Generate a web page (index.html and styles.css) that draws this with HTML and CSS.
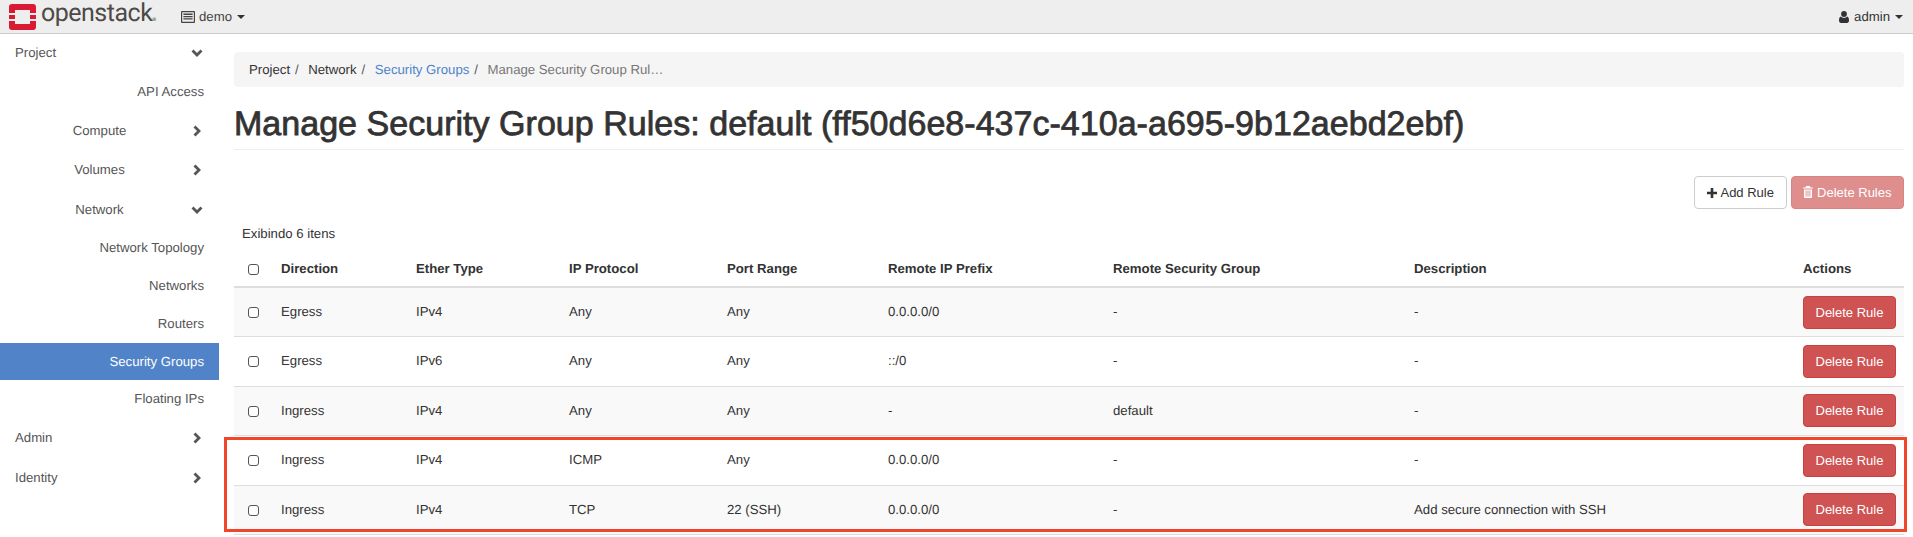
FILE: index.html
```html
<!doctype html>
<html lang="en">
  <head>
    <meta charset="UTF-8" />
    <meta name="viewport" content="width=device-width, initial-scale=1.0" />
    <title>Manage Security Group Rules</title>
    <link rel="stylesheet" href="styles.css">
  </head>
  <body>
    <header class="navbar">
      <a class="brand" href="#">
        <svg class="brand-logo" viewBox="0 0 27 26">
          <path fill="#da1a32" fill-rule="evenodd" d="M3 0h21a3 3 0 0 1 3 3v6h-6V6H6v3H0V3a3 3 0 0 1 3-3zM0 11h6v4H0zM21 11h6v4h-6zM0 17h6v3h15v-3h6v6a3 3 0 0 1-3 3H3a3 3 0 0 1-3-3z"/>
        </svg>
        <span class="brand-name">openstack<small>®</small></span>
      </a>
      <div class="project-picker">
        <svg class="icon-project" viewBox="0 0 14 12">
          <path fill="#444" fill-rule="evenodd" d="M1 0h12a1 1 0 0 1 1 1v10a1 1 0 0 1-1 1H1a1 1 0 0 1-1-1V1a1 1 0 0 1 1-1zm.2 1.2v9.6h11.6V1.2zM2.4 2.5h9.2v1.4H2.4zM2.4 5h9.2v1.2H2.4zM2.4 7.3h9.2v1.2H2.4z"/>
        </svg>
        <span>demo</span>
        <i class="caret"></i>
      </div>
      <div class="user-menu">
        <svg class="icon-user" viewBox="0 0 10 12">
          <circle cx="5" cy="3" r="2.9" fill="#333"/>
          <path fill="#333" d="M1.8 5.6C2.6 6.5 3.7 7 5 7s2.4-.5 3.2-1.4C9.4 5.9 10 7.4 10 9.6 10 11 9.2 12 8 12H2C.8 12 0 11 0 9.6 0 7.4.6 5.9 1.8 5.6z"/>
        </svg>
        <span>admin</span>
        <i class="caret"></i>
      </div>
    </header>

    <div class="page">
      <nav class="sidebar">
        <a class="nav-top" href="#">Project
          <svg class="chev" viewBox="0 0 12 12"><path d="M1.5 3.5 6 8l4.5-4.5"/></svg>
        </a>
        <a class="nav-leaf" href="#">API Access</a>
        <a class="nav-group" href="#"><span>Compute</span>
          <svg class="chev" viewBox="0 0 12 12"><path d="M3.5 1.5 8 6l-4.5 4.5"/></svg>
        </a>
        <a class="nav-group" href="#"><span>Volumes</span>
          <svg class="chev" viewBox="0 0 12 12"><path d="M3.5 1.5 8 6l-4.5 4.5"/></svg>
        </a>
        <a class="nav-group" href="#"><span>Network</span>
          <svg class="chev" viewBox="0 0 12 12"><path d="M1.5 3.5 6 8l4.5-4.5"/></svg>
        </a>
        <a class="nav-leaf" href="#">Network Topology</a>
        <a class="nav-leaf" href="#">Networks</a>
        <a class="nav-leaf" href="#">Routers</a>
        <a class="nav-leaf active" href="#">Security Groups</a>
        <a class="nav-leaf" href="#">Floating IPs</a>
        <a class="nav-top" href="#">Admin
          <svg class="chev" viewBox="0 0 12 12"><path d="M3.5 1.5 8 6l-4.5 4.5"/></svg>
        </a>
        <a class="nav-top" href="#">Identity
          <svg class="chev" viewBox="0 0 12 12"><path d="M3.5 1.5 8 6l-4.5 4.5"/></svg>
        </a>
      </nav>

      <main class="content">
        <ol class="breadcrumb">
          <li>Project</li>
          <li>Network</li>
          <li><a href="#">Security Groups</a></li>
          <li class="current">Manage Security Group Rul…</li>
        </ol>

        <div class="page-header">
          <h1>Manage Security Group Rules: default (ff50d6e8-437c-410a-a695-9b12aebd2ebf)</h1>
        </div>

        <div class="toolbar">
          <button class="btn btn-default" type="button">
            <svg class="icon-plus" viewBox="0 0 10 10"><path d="M3.7 0h2.6v3.7H10v2.6H6.3V10H3.7V6.3H0V3.7h3.7z"/></svg>
            Add Rule
          </button>
          <button class="btn btn-danger disabled" type="button">
            <svg class="icon-trash" viewBox="0 0 10 12"><path fill-rule="evenodd" d="M3.2 0h3.6l.7 1.4H10v1.2H0V1.4h2.5zM1 3.4h8V11a1 1 0 0 1-1 1H2a1 1 0 0 1-1-1zm1.6 1.2v6h.9v-6zm1.9 0v6h1v-6zm2 0v6h.9v-6z"/></svg>
            Delete Rules
          </button>
        </div>

        <div class="count">Exibindo 6 itens</div>

        <div class="table-wrap">
          <table class="rules">
            <thead>
              <tr>
                <th class="col-check"><input type="checkbox" /></th>
                <th class="col-direction">Direction</th>
                <th class="col-ether">Ether Type</th>
                <th class="col-proto">IP Protocol</th>
                <th class="col-port">Port Range</th>
                <th class="col-prefix">Remote IP Prefix</th>
                <th class="col-group">Remote Security Group</th>
                <th class="col-desc">Description</th>
                <th class="col-actions">Actions</th>
              </tr>
            </thead>
            <tbody>
              <tr>
                <td><input type="checkbox" /></td>
                <td>Egress</td><td>IPv4</td><td>Any</td><td>Any</td><td>0.0.0.0/0</td><td>-</td><td>-</td>
                <td><button class="btn btn-danger" type="button">Delete Rule</button></td>
              </tr>
              <tr>
                <td><input type="checkbox" /></td>
                <td>Egress</td><td>IPv6</td><td>Any</td><td>Any</td><td>::/0</td><td>-</td><td>-</td>
                <td><button class="btn btn-danger" type="button">Delete Rule</button></td>
              </tr>
              <tr>
                <td><input type="checkbox" /></td>
                <td>Ingress</td><td>IPv4</td><td>Any</td><td>Any</td><td>-</td><td>default</td><td>-</td>
                <td><button class="btn btn-danger" type="button">Delete Rule</button></td>
              </tr>
              <tr>
                <td><input type="checkbox" /></td>
                <td>Ingress</td><td>IPv4</td><td>ICMP</td><td>Any</td><td>0.0.0.0/0</td><td>-</td><td>-</td>
                <td><button class="btn btn-danger" type="button">Delete Rule</button></td>
              </tr>
              <tr>
                <td><input type="checkbox" /></td>
                <td>Ingress</td><td>IPv4</td><td>TCP</td><td>22 (SSH)</td><td>0.0.0.0/0</td><td>-</td><td>Add secure connection with SSH</td>
                <td><button class="btn btn-danger" type="button">Delete Rule</button></td>
              </tr>
            </tbody>
          </table>
          <div class="highlight"></div>
        </div>
      </main>
    </div>
  </body>
</html>
```

FILE: styles.css
```css
html,
body {
  height: 100%;
}

body {
  font-family: "Liberation Sans", Arial, sans-serif;
  font-size: 13.2px;
  line-height: 18px;
  color: #333;
  margin: 0;
  padding: 0;
  background-color: #fff;
  overflow: hidden;
  text-rendering: geometricPrecision;
}

a {
  text-decoration: none;
}

.navbar {
  display: flex;
  align-items: center;
  height: 33px;
  background-color: #eee;
  border-bottom: 1px solid #ccc;
}

.brand {
  display: flex;
  align-items: center;
  margin-left: 9px;
  width: 172px;
  height: 30px;
}

.brand-logo {
  flex: none;
  width: 27px;
  height: 26px;
  margin-right: 5px;
}

.brand-name {
  font-family: Roboto, sans-serif;
  font-size: 25px;
  font-weight: 400;
  letter-spacing: -0.5px;
  line-height: 28px;
  color: #4d4a47;
}

.brand-name small {
  font-size: 5px;
  font-weight: 400;
  letter-spacing: 0;
}

.project-picker {
  display: flex;
  align-items: center;
  color: #444;
}

.icon-project {
  width: 14px;
  height: 12px;
  margin-right: 4px;
}

.caret {
  width: 0;
  height: 0;
  margin-left: 5px;
  border-top: 4px solid #333;
  border-left: 4px solid transparent;
  border-right: 4px solid transparent;
}

.user-menu {
  display: flex;
  align-items: center;
  margin-left: auto;
  margin-right: 10px;
}

.icon-user {
  width: 10px;
  height: 12px;
  margin-right: 5px;
}

.page {
  display: flex;
}

.sidebar {
  flex: none;
  width: 219px;
  margin-top: -0.5px;
}

.nav-top,
.nav-group,
.nav-leaf {
  display: flex;
  align-items: center;
  color: #555;
}

.nav-top {
  justify-content: space-between;
  height: 39.5px;
  padding: 0 15px;
}

.nav-group {
  height: 39.5px;
  padding-right: 15px;
}

.nav-group span {
  flex: 1;
  text-align: center;
  padding-left: 8px;
}

.nav-leaf {
  justify-content: flex-end;
  height: 37.8px;
  padding-right: 15px;
}

.nav-leaf.active {
  background-color: #5083c8;
  color: #fff;
}

.chev {
  width: 12px;
  height: 12px;
  margin-right: 1px;
  fill: none;
  stroke: #555;
  stroke-width: 2.8;
}

.content {
  flex: 1;
  min-width: 0;
  padding: 18px 9px 0 15px;
}

.breadcrumb {
  display: flex;
  height: 35px;
  align-items: center;
  box-sizing: border-box;
  margin: 0;
  padding: 0 15px;
  list-style: none;
  background-color: #f5f5f5;
  border-radius: 4px;
}

.breadcrumb li + li::before {
  content: "/";
  padding: 0 9.5px 0 5px;
  color: #555;
}

.breadcrumb a {
  color: #4d82cc;
}

.breadcrumb .current {
  color: #777;
}

.page-header {
  margin-top: 19px;
  padding-bottom: 7px;
  border-bottom: 1px solid #eee;
}

h1 {
  margin: 0;
  font-size: 34px;
  font-weight: normal;
  line-height: 36px;
  letter-spacing: 0.03px;
  color: #333;
  -webkit-text-stroke: 0.8px #333;
  white-space: nowrap;
}

.toolbar {
  display: flex;
  justify-content: flex-end;
  gap: 4px;
  margin-top: 26px;
}

.btn {
  box-sizing: border-box;
  height: 33px;
  padding: 0 11.5px;
  font-family: inherit;
  font-size: 13px;
  white-space: nowrap;
  border: 1px solid transparent;
  border-radius: 4px;
  cursor: pointer;
}

.btn svg {
  vertical-align: -1px;
}

.btn-default {
  padding: 0 12px;
  color: #333;
  background-color: #fff;
  border-color: #ccc;
}

.btn-danger {
  color: #fff;
  background-color: #cf5353;
  border-color: #c9403d;
}

.btn-danger.disabled {
  opacity: 0.65;
}

.icon-plus {
  width: 10px;
  height: 10px;
  margin-right: 1px;
  fill: #333;
}

.icon-trash {
  width: 10px;
  height: 12px;
  fill: #fff;
}

.count {
  margin-top: 16px;
  padding-left: 8px;
}

.table-wrap {
  position: relative;
}

.rules {
  width: 100%;
  table-layout: fixed;
  border-collapse: collapse;
}

.rules th {
  height: 44px;
  box-sizing: border-box;
  padding: 8px;
  text-align: left;
  vertical-align: bottom;
  border-bottom: 2px solid #ddd;
}

.rules td {
  height: 49.5px;
  box-sizing: border-box;
  padding: 0 8px;
  vertical-align: middle;
  border-bottom: 1px solid #ddd;
}

.rules tbody tr:nth-child(odd) {
  background-color: #f9f9f9;
}

.col-check { width: 39px; }
.col-direction { width: 135px; }
.col-ether { width: 153px; }
.col-proto { width: 158px; }
.col-port { width: 161px; }
.col-prefix { width: 225px; }
.col-group { width: 301px; }
.col-desc { width: 389px; }

input[type="checkbox"] {
  appearance: none;
  box-sizing: border-box;
  display: block;
  width: 11px;
  height: 11px;
  margin: 1px 0 0 6px;
  background-color: #fff;
  border: 1px solid #555;
  border-radius: 3px;
}

.rules th input[type="checkbox"] {
  margin-bottom: 3px;
}

.highlight {
  position: absolute;
  left: -10px;
  right: -3px;
  bottom: 3px;
  height: 95px;
  box-sizing: border-box;
  border: 3px solid #f1452c;
  pointer-events: none;
}
```
